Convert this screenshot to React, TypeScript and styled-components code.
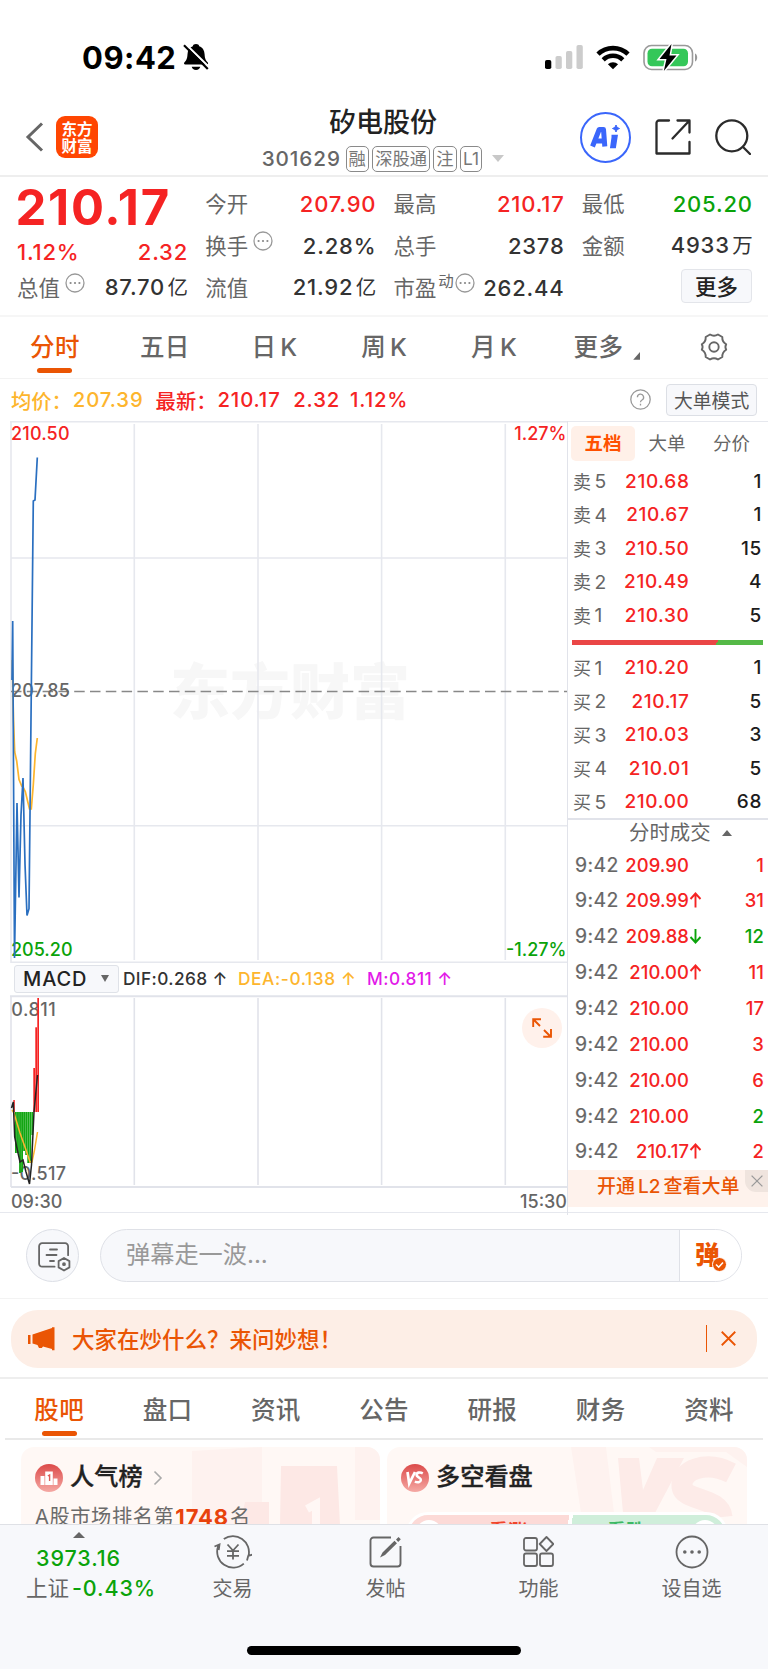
import React from 'react';
import styled, { createGlobalStyle, css } from 'styled-components';

const RED = '#f52323';
const GREEN = '#0aa30a';
const ORANGE = '#ea5504';
const GRAY = '#666666';
const INK = '#333333';
const LINE = '#e6e8ee';

const GlobalStyle = createGlobalStyle`
  * { box-sizing: border-box; }
  html, body { margin: 0; padding: 0; background: #fff; }
  body { font-family: Inter, "Noto Sans CJK SC", sans-serif; color: ${INK}; }
  svg { display: block; flex: none; }
`;

const Screen = styled.div`
  width: 768px;
  height: 1669px;
  overflow: hidden;
  display: flex;
  flex-direction: column;
  background: #fff;
  white-space: nowrap;
`;

/* ---------- status bar ---------- */
const StatusBar = styled.div`
  height: 100px;
  padding: 15px 69px 0 82px;
  display: flex;
  align-items: center;
`;
const Clock = styled.span`
  width: 101px;
  font-size: 31px;
  font-weight: 700;
  letter-spacing: 0.5px;
  color: #000;
`;
const StatusIcons = styled.div`
  margin-left: auto;
  display: flex;
  align-items: center;
  gap: 13px;
`;

/* ---------- header ---------- */
const Header = styled.header`
  height: 77px;
  border-bottom: 2px solid #eeeeee;
  padding: 0 17px 0 25px;
  display: grid;
  grid-template-columns: 200px 1fr 200px;
  align-items: center;
`;
const HeaderLeft = styled.div`
  display: flex;
  align-items: center;
  gap: 12px;
`;
const AppLogo = styled.div`
  width: 42px;
  height: 42px;
  border-radius: 9px;
  background: #ff4602;
  color: #fff;
  font: 700 15.5px/17px "Noto Sans CJK SC", sans-serif;
  text-align: center;
  padding-top: 4px;
`;
const TitleBlock = styled.div`
  display: flex;
  flex-direction: column;
  align-items: center;
  padding: 3px 10px 0 0;
`;
const Title = styled.h1`
  margin: 0;
  font-size: 27px;
  line-height: 34px;
  font-weight: 500;
  color: #222;
  height: 40px;
`;
const CodeRow = styled.div`
  display: flex;
  align-items: center;
  height: 26px;
  gap: 3.5px;
  font-size: 20.7px;
  font-weight: 500;
  color: ${GRAY};
`;
const Code = styled.span`
  width: 80.5px;
  letter-spacing: 0.9px;
`;
const Tag = styled.span`
  height: 26px;
  border: 1.4px solid #8a8a8a;
  border-radius: 5px;
  padding: 0 1.9px;
  font-size: 17.3px;
  line-height: 23px;
  font-weight: 400;
  color: #777;
`;
const Caret = styled.i<{ $w: number; $h: number; $c: string; $up?: boolean; $ml?: number }>`
  width: 0;
  height: 0;
  margin-left: ${p => p.$ml ?? 0}px;
  border-left: ${p => p.$w / 2}px solid transparent;
  border-right: ${p => p.$w / 2}px solid transparent;
  ${p => (p.$up ? 'border-bottom' : 'border-top')}: ${p => p.$h}px solid ${p => p.$c};
`;
const HeaderRight = styled.div`
  display: flex;
  align-items: center;
  justify-content: flex-end;
  gap: 24px;
`;
const AiBadge = styled.div`
  width: 51px;
  height: 51px;
  border: 2.5px solid #3a66fb;
  border-radius: 50%;
  display: grid;
  place-items: center;
`;

/* ---------- quote ---------- */
const Quote = styled.section`
  height: 140px;
  border-bottom: 2px solid #f6f6f6;
  padding: 6px 16px 0 17px;
  display: grid;
  grid-template-columns: repeat(4, 1fr);
  column-gap: 18px;
`;
const QuoteCol = styled.div`
  display: grid;
  grid-template-rows: repeat(3, 42px);
  align-items: center;
`;
const MainCol = styled.div`
  display: grid;
  grid-template-rows: 50px 34px 42px;
  align-items: center;
`;
const BigPrice = styled.div`
  margin-left: -1.5px;
  font-size: 49px;
  line-height: 48px;
  font-weight: 700;
  color: ${RED};
  letter-spacing: 1.7px;
`;
const Pair = styled.div<{ $drop?: number }>`
  display: flex;
  align-items: center;
  justify-content: space-between;
  padding-top: ${p => p.$drop ?? 0}px;
  font-size: 21.5px;
  line-height: 30px;
`;
const Label = styled.span`
  display: flex;
  align-items: flex-start;
  gap: 5px;
  font-size: 21.4px;
  color: ${GRAY};
  sup { font-size: 15.5px; line-height: 18px; margin: 0 -4px 0 -3px; }
`;
const Value = styled.span<{ $c?: string }>`
  font-weight: 500;
  font-size: 22px;
  letter-spacing: 0.8px;
  margin-right: -0.8px;
  color: ${p => p.$c || INK};
  small { font-size: 20.5px; font-weight: 400; margin-left: 2.5px; letter-spacing: 0; }
`;
const MoreButton = styled.button`
  justify-self: end;
  width: 71px;
  height: 34px;
  margin-top: -4px;
  padding: 0;
  border: 1.5px solid #e3e5ea;
  border-radius: 4px;
  background: #f7f8fb;
  font: 500 21.5px/30px "Noto Sans CJK SC", sans-serif;
  color: #222;
`;

/* ---------- tabs ---------- */
const PeriodTabs = styled.nav`
  height: 62px;
  border-bottom: 1.5px solid #f3f3f3;
  display: grid;
  grid-template-columns: repeat(7, 109.8px);
`;
const DetailTabs = styled.nav`
  height: 61px;
  margin: 0 5px;
  border-bottom: 2px solid #e9e9e9;
  display: grid;
  grid-template-columns: repeat(7, 108.3px);
`;
const Tab = styled.div<{ $active?: boolean; $top?: number }>`
  display: flex;
  flex-direction: column;
  align-items: center;
  padding-top: ${p => p.$top ?? 12}px;
  font-size: 24.5px;
  line-height: 36px;
  font-weight: 500;
  color: ${p => (p.$active ? ORANGE : GRAY)};
  &::after {
    content: '';
    width: 35px;
    height: 5px;
    margin-top: 3px;
    border-radius: 3px;
    background: ${p => (p.$active ? ORANGE : 'transparent')};
  }
`;
const TabText = styled.span`
  display: flex;
  align-items: flex-end;
  gap: 4px;
  letter-spacing: 0.3px;
`;
const Corner = styled.i`
  width: 7px;
  height: 8px;
  margin: 0 -6px 5px 6px;
  background: ${GRAY};
  clip-path: polygon(100% 0, 100% 100%, 0 100%);
`;

/* ---------- chart ---------- */
const AverageRow = styled.div`
  height: 42px;
  padding: 0 11px;
  display: flex;
  align-items: center;
  font-size: 20.3px;
  font-weight: 500;
  color: ${RED};
`;
const Avg = styled.span<{ $w: number; $c?: string; $s?: number }>`
  width: ${p => p.$w}px;
  letter-spacing: ${p => p.$s ?? 0.9}px;
  color: ${p => p.$c || RED};
`;
const ModeButton = styled.button`
  width: 91px;
  height: 32px;
  margin-left: 15px;
  padding: 0;
  border: 1.5px solid #dcdfe5;
  border-radius: 4px;
  background: #f7f8fb;
  font: 400 18.8px/28px "Noto Sans CJK SC", sans-serif;
  color: #555;
`;
const Trading = styled.section`
  height: 792px;
  border-bottom: 1.5px solid #e6e8ee;
  display: grid;
  grid-template-columns: 568px 200px;
`;
const ChartSide = styled.div`
  border-right: 1.5px solid #e1e3ea;
  padding-left: 10px;
  display: flex;
  flex-direction: column;
`;
const MacdBar = styled.div`
  height: 32px;
  padding-left: 4px;
  display: flex;
  align-items: center;
  font-size: 17.3px;
  font-weight: 500;
`;
const MacdSelect = styled.div`
  width: 105px;
  height: 28px;
  margin-right: 4px;
  padding: 0 9px 0 8px;
  border: 1.5px solid #dfe2e8;
  border-radius: 3px;
  background: #f7f8fb;
  display: flex;
  align-items: center;
  justify-content: space-between;
  font-size: 20px;
  letter-spacing: 0.9px;
  color: #222;
`;
const MacdValue = styled.span<{ $c: string; $w: number; $s?: number }>`
  width: ${p => p.$w}px;
  letter-spacing: ${p => p.$s ?? 0.4}px;
  color: ${p => p.$c};
`;
const MacdPane = styled.div`
  position: relative;
`;
const ExpandButton = styled.div`
  position: absolute;
  right: 5px;
  top: 13px;
  width: 40px;
  height: 40px;
  border-radius: 50%;
  background: #fff1eb;
  display: grid;
  place-items: center;
`;
const TimeAxis = styled.div`
  display: flex;
  justify-content: space-between;
  padding: 0 0 0 1px;
  font-size: 18px;
  line-height: 27px;
  font-weight: 500;
  color: ${GRAY};
`;

/* ---------- order book ---------- */
const Book = styled.aside`
  border-top: 1.5px solid #e6e8ee;
  display: flex;
  flex-direction: column;
`;
const BookTabs = styled.div`
  height: 43px;
  padding: 4px 6px 0 3px;
  display: grid;
  grid-template-columns: 64px 64px 65px;
`;
const BookTab = styled.div<{ $active?: boolean }>`
  height: 35px;
  border-radius: 5px;
  text-align: center;
  font-size: 18.5px;
  line-height: 34px;
  color: ${GRAY};
  ${p => p.$active && css`background: #fff0e8; color: #ff5000; font-weight: 700;`}
`;
const Level = styled.div`
  height: 33.5px;
  padding: 0 6px 0 5px;
  display: grid;
  grid-template-columns: 40px 76.5px 1fr;
  align-items: center;
  font-size: 19px;
  font-weight: 500;
  letter-spacing: 0.65px;
  text-align: right;
`;
const LevelName = styled.span`
  display: flex;
  align-items: center;
  gap: 3.5px;
  font-size: 19.3px;
  font-weight: 400;
  letter-spacing: 0;
  color: ${GRAY};
  i { font: 400 18px/26px "Noto Sans CJK SC", sans-serif; margin-top: -1px; }
`;
const Ink = styled.span<{ $c: string }>`
  color: ${p => p.$c};
`;
const Ratio = styled.div`
  height: 5px;
  margin: 8px 5px 6px 4px;
  background: linear-gradient(120deg, #ea4646 0 75.5%, #55b947 75.5%);
`;
const DealHead = styled.div`
  height: 29px;
  margin-top: -0.8px;
  border-top: 2px solid #e1e3ea;
  padding-left: 61px;
  display: flex;
  align-items: center;
  gap: 11px;
  font-size: 20.4px;
  line-height: 26px;
  color: ${GRAY};
`;
const Deal = styled.div`
  height: 35.85px;
  padding: 0 4px 0 7px;
  display: grid;
  grid-template-columns: 44px 70px 14px 1fr;
  align-items: center;
  font-size: 18.4px;
  font-weight: 500;
  letter-spacing: 0.1px;
  text-align: right;
  time { font-size: 19.5px; text-align: left; font-weight: 400; letter-spacing: 0.4px; color: ${GRAY}; -webkit-text-stroke: 0.2px ${GRAY}; }
`;
const L2Banner = styled.div`
  height: 37px;
  margin-top: 1px;
  padding-left: 29px;
  display: flex;
  background: #fef2ec;
  font-size: 19px;
  line-height: 34px;
  font-weight: 500;
  color: ${ORANGE};
  word-spacing: -2px;
`;
const L2Close = styled.div`
  width: 23px;
  height: 22px;
  margin-left: auto;
  border-bottom-left-radius: 11px;
  background: #efe4de;
  display: grid;
  place-items: center;
`;

/* ---------- comment input ---------- */
const CommentRow = styled.section`
  height: 87px;
  border-bottom: 1.5px solid #f3f3f3;
  padding: 1px 26px 0;
  display: flex;
  align-items: center;
  gap: 21px;
`;
const RoundButton = styled.div`
  width: 53px;
  height: 53px;
  border: 1.2px solid #dcdfe6;
  border-radius: 50%;
  background: #f7f8fb;
  padding: 12px 0 0 11px;
`;
const InputPill = styled.div`
  width: 642px;
  height: 53px;
  border: 1.5px solid #dfe1e7;
  border-radius: 27px;
  overflow: hidden;
  background: #f7f8fb;
  display: flex;
`;
const Placeholder = styled.span`
  flex: 1;
  padding-left: 25px;
  font-size: 24.2px;
  line-height: 49px;
  color: #999;
`;
const SendBox = styled.div`
  width: 62px;
  border-left: 1.5px solid #dfe1e7;
  background: #fff;
  position: relative;
  padding-left: 15px;
  font: 900 24.5px/48px "Noto Sans CJK SC", sans-serif;
  color: ${ORANGE};
`;
const Check = styled.svg`
  position: absolute;
  left: 32px;
  top: 27px;
`;

/* ---------- promo ---------- */
const PromoWrap = styled.section`
  height: 80px;
  border-bottom: 2px solid #eeeeee;
  padding: 10.5px 11px 0;
`;
const Promo = styled.div`
  height: 58px;
  border-radius: 27px;
  background: #fdeee6;
  padding: 0 21px 0 17px;
  display: flex;
  align-items: center;
  font-size: 22.5px;
  font-weight: 500;
  color: ${ORANGE};
`;
const PromoText = styled.span`
  flex: 1;
  padding-left: 17px;
  margin-top: -1px;
`;
const PromoRule = styled.i`
  width: 1.5px;
  height: 27px;
  margin-right: 14px;
  background: ${ORANGE};
`;

/* ---------- cards ---------- */
const Cards = styled.section`
  height: 84px;
  padding: 7px 21px 0;
  display: grid;
  grid-template-columns: 359px 360px;
  gap: 7px;
  overflow: hidden;
`;
const Card = styled.div`
  position: relative;
  height: 120px;
  border-radius: 13px;
  overflow: hidden;
  background: #fff8f5;
  padding: 15px 14px 0;
`;
const CardArt = styled.svg`
  position: absolute;
  right: 0;
  top: 0;
`;
const CardHead = styled.div`
  position: relative;
  height: 32px;
  display: flex;
  align-items: center;
  gap: 8px;
  font-size: 24.2px;
  font-weight: 500;
  color: #222;
  svg:last-child:not(:first-child) { margin-left: 2px; }
`;
const CardTitle = styled.span`
  line-height: 32px;
  margin: -2px 0 0 -1px;
  -webkit-text-stroke: 0.3px #222;
`;
const Rank = styled.div`
  position: relative;
  display: flex;
  align-items: center;
  margin-top: 7px;
  font-size: 20.2px;
  line-height: 32px;
  letter-spacing: 0.6px;
  color: #6b6b6b;
  b { font-size: 22px; color: #e8420c; letter-spacing: 0.9px; margin: 0 1px 0 1px; }
`;
const Vote = styled.div`
  position: relative;
  margin: 18px 0 0 5px;
  width: 322px;
  height: 44px;
  border-radius: 24px;
  border: 3px solid #fff;
  overflow: hidden;
  background: linear-gradient(96deg, #fcdad7 0 50%, #fff 50% 51.2%, #cfeeda 51.2%);
  display: flex;
  align-items: flex-start;
  font-size: 19px;
  line-height: 26px;
  font-weight: 700;
`;
const VoteDot = styled.i`
  width: 26px;
  height: 26px;
  border-radius: 50%;
  margin: 5px 7px;
  background: #fff;
`;
const VoteSide = styled.span<{ $c: string }>`
  flex: 1;
  padding-top: 4px;
  text-align: center;
  color: ${p => p.$c};
`;

/* ---------- bottom bar ---------- */
const BottomBar = styled.footer`
  height: 145px;
  border-top: 1.5px solid #dfe1e6;
  background: #f7f8fb;
  display: flex;
  flex-direction: column;
`;
const BottomItems = styled.div`
  height: 82px;
  padding-left: 2px;
  display: grid;
  grid-template-columns: 154px repeat(4, 153px);
`;
const IndexCell = styled.div`
  display: flex;
  flex-direction: column;
  align-items: flex-start;
  padding: 7px 0 0 24px;
  font-size: 21.5px;
  line-height: 30px;
  font-weight: 500;
  letter-spacing: 0.9px;
  color: ${GREEN};
`;
const IndexValue = styled.span`
  margin: 5px 0 0 10px;
`;
const IndexChange = styled.span`
  em { font-style: normal; font-weight: 400; letter-spacing: 0; color: ${GRAY}; margin-right: 3px; }
`;
const NavItem = styled.div`
  display: flex;
  flex-direction: column;
  align-items: center;
  padding-top: 10px;
  gap: 5px;
  font-size: 20px;
  line-height: 30px;
  color: ${GRAY};
`;
const HomeIndicator = styled.div`
  width: 274px;
  height: 9px;
  margin: 39px auto 0;
  border-radius: 5px;
  background: #000;
`;

/* ---------- icons ---------- */
const Dots = () => (
  <svg width="20" height="20" viewBox="0 0 20 20">
    <circle cx="10" cy="10" r="9" fill="none" stroke="#999" strokeWidth="1.3" />
    <g fill="#888"><circle cx="5.6" cy="10" r="1.1" /><circle cx="10" cy="10" r="1.1" /><circle cx="14.4" cy="10" r="1.1" /></g>
  </svg>
);
const Cross = ({ s, c, w }: { s: number; c: string; w: number }) => (
  <svg width={s} height={s} viewBox="0 0 14 14"><path d="M.7.7 13.3 13.3M13.3.7.7 13.3" stroke={c} strokeWidth={w} fill="none" /></svg>
);
const BellOff = () => (
  <svg width="26" height="28" viewBox="0 0 26 28">
    <path d="M13 1c1.8 0 3 .9 3.2 2.2 3.6 1.2 5.200 4.300 5.400 8 .2 4.600 1.200 6 3.200 8.300.6.8.3 2-.9 2H2.200c-1.200 0-1.500-1.200-.9-2 2-2.300 3-3.700 3.200-8.300.2-3.700 1.800-6.800 5.300-8C10 1.900 11.200 1 13 1Z" fill="#000" />
    <path d="M8.700 23.700h8.600c-.4 1.900-2 3.300-4.300 3.300s-3.900-1.400-4.300-3.300Z" fill="#000" />
    <path d="M2.500 1 26 24" stroke="#fff" strokeWidth="2.200" />
    <path d="M1 2.300 24.800 26" stroke="#000" strokeWidth="2.200" />
  </svg>
);
const Signal = () => (
  <svg width="38" height="25" viewBox="0 0 38 25">
    <rect x="0" y="15" width="6.300" height="9" rx="1.800" fill="#000" />
    <g fill="#ccc"><rect x="10.500" y="11" width="6.300" height="13" rx="1.800" /><rect x="21" y="6" width="6.300" height="18" rx="1.800" /><rect x="31.500" y="0" width="6.300" height="24" rx="1.800" /></g>
  </svg>
);
const Wifi = () => (
  <svg width="34" height="25" viewBox="0 0 34 25" fill="none" stroke="#000">
    <path d="M2 9.200a21.500 21.500 0 0 1 30 0" strokeWidth="4.600" />
    <path d="M7.200 14.800a14 14 0 0 1 19.600 0" strokeWidth="4.500" />
    <path d="M17 24.300 11.900 19.200a7.400 7.400 0 0 1 10.200 0Z" fill="#000" stroke="none" />
  </svg>
);
const Battery = () => (
  <svg width="56" height="27" viewBox="0 0 56 27">
    <rect x="1" y="1.500" width="48.500" height="24" rx="7.500" fill="none" stroke="#999" strokeWidth="1.600" />
    <path d="M52 9.500c2.900.8 2.900 7.200 0 8Z" fill="#999" />
    <rect x="4.500" y="4.800" width="40.500" height="17.500" rx="4.500" fill="#34c759" />
    <path d="M28.500 0 16.500 15h7l-2.700 12L33.500 11.500h-7Z" fill="#000" stroke="#fff" strokeWidth="3" paintOrder="stroke" />
  </svg>
);
const AiMark = () => (
  <svg width="33" height="26" viewBox="0 0 33 26" fill="none" stroke="#3a66fb">
    <path d="M3.500 22.500 10.200 5.500h4.300l1.300 17M7 17h8" strokeWidth="5" strokeLinejoin="round" />
    <path d="M22.500 12.500h4.500l-1.600 10h-2.500l1.300-9" strokeWidth="3.400" />
    <path d="m27 1 1.100 2.400L30.500 4.500l-2.400 1.100L27 8l-1.100-2.400L23.500 4.500l2.400-1.100Z" fill="#3a66fb" strokeWidth="1" />
  </svg>
);
const ShareIcon = () => (
  <svg width="36" height="36" viewBox="0 0 36 36" fill="none" stroke="#2b2b2b" strokeWidth="2.300" strokeLinecap="round" strokeLinejoin="round">
    <path d="M14 1.500H4A2.500 2.500 0 0 0 1.500 4v30.500h33V23M22.500 1.500h12v12M34 2 17.500 19.500" />
  </svg>
);
const SearchIcon = () => (
  <svg width="36" height="36" viewBox="0 0 36 36" fill="none" stroke="#2b2b2b" strokeWidth="2.300" strokeLinecap="round">
    <circle cx="16.800" cy="16.800" r="15.500" /><path d="m28 28 7 7" />
  </svg>
);
const Gear = () => (
  <svg width="30" height="30" viewBox="0 0 30 30" fill="none" stroke={GRAY} strokeWidth="1.900" strokeLinejoin="round">
    <path d="M11 2.500Q15 5 19 2.500L23.300 5Q23 9.800 27.200 12.300Q25.600 15 27.200 17.700Q23 20.200 23.300 25L19 27.500Q15 25 11 27.500L6.700 25Q7 20.200 2.800 17.700Q4.400 15 2.800 12.300Q7 9.800 6.700 5Z" />
    <circle cx="15" cy="15" r="4.700" />
  </svg>
);
const Help = () => (
  <svg width="21" height="21" viewBox="0 0 21 21" fill="none" stroke="#999" strokeWidth="1.300">
    <circle cx="10.500" cy="10.500" r="9.700" /><path d="M7.400 8.300a3.100 3.100 0 1 1 4.600 2.700c-1 .6-1.500 1-1.500 2.200M10.500 14.800v1.600" />
  </svg>
);
const Expand = () => (
  <svg width="20" height="20" viewBox="0 0 20 20" fill="none" stroke={ORANGE} strokeWidth="1.900">
    <path d="M1.200 9V1.200H9M1.500 1.500 8 8M19 11v7.800h-7.800M18.500 18.500 12 12" />
  </svg>
);
const UpArrow = ({ c, down }: { c: string; down?: boolean }) => (
  <svg width="13" height="16" viewBox="0 0 13 16" fill="none" stroke={c} strokeWidth="1.900">
    <path d={down ? 'M6.500 1v13.500M1.500 9l5 5.500 5-5.500' : 'M6.500 15.500V2M1.500 7l5-5.500 5 5.500'} />
  </svg>
);
const DanmuSettings = () => (
  <svg width="33" height="31" viewBox="0 0 33 31" fill="none" stroke={GRAY} strokeWidth="1.800" strokeLinecap="round" strokeLinejoin="round">
    <path d="M29.500 13V4a3 3 0 0 0-3-3h-23a3 3 0 0 0-3 3v17.500a3 3 0 0 0 3 3H16" transform="translate(.6 .2)" />
    <path d="M12 7.500h7M8.500 13h10M12 19h4" />
    <path d="m26 16 5.400 3.100v6.300L26 28.500l-5.400-3.100v-6.300Z" /><circle cx="26" cy="22.200" r="1" fill={GRAY} />
  </svg>
);
const Megaphone = () => (
  <svg width="27" height="24" viewBox="0 0 27 24" fill={ORANGE}>
    <path d="M0 8h2.500v9H0ZM4.500 7.500 24 1V.300h2.500v23H24V22l-9-2.500-1.200 1.500H11l-1.500-3-5-1.500Z" />
  </svg>
);
const RankIcon = () => (
  <svg width="28" height="28" viewBox="0 0 28 28">
    <defs><linearGradient id="rg" x1="0" y1="0" x2="0" y2="1"><stop offset="0" stopColor="#dc4a49" /><stop offset="1" stopColor="#f5a9a4" /></linearGradient></defs>
    <circle cx="14" cy="14" r="14" fill="url(#rg)" />
    <path d="M5.500 12H9.500V21H5.500ZM10.200 7.500h7.600V21h-7.600ZM18.500 14.500h4V21h-4Z" fill="#fff" />
    <path d="m12.800 12 1.800-1v6" fill="none" stroke="#df5c58" strokeWidth="1.400" />
  </svg>
);
const VsIcon = () => (
  <svg width="28" height="28" viewBox="0 0 28 28">
    <circle cx="14" cy="14" r="14" fill="url(#rg)" />
    <path d="M6.500 8 8.200 19.500 14 8" fill="none" stroke="#fff" strokeWidth="2.700" />
    <path d="M21.800 9.300c-3-1.600-6.200-.7-6.300 1.500-.1 2.500 4.700 2.500 4.400 5.200-.2 2.300-3.600 3-6 1.500" fill="none" stroke="#fff" strokeWidth="2.600" />
  </svg>
);
const TradeIcon = () => (
  <svg width="38" height="34" viewBox="0 0 38 34" fill="none" stroke={GRAY} strokeWidth="1.800">
    <path d="M9.800 4A16 16 0 0 1 34.500 21M29.800 28.600A16 16 0 0 1 4.200 11M.5 11.500l5-2-.8 5.500M33 25.500l1.200-4.500 4-1.300" />
    <path d="m13.500 9.500 5.500 6 5.500-6M19 15v9.500M13 16.200h12M13 20.800h12" />
  </svg>
);
const PostIcon = () => (
  <svg width="33" height="34" viewBox="0 0 33 34" fill="none" stroke={GRAY}>
    <path d="M22 2.500H4.500a3 3 0 0 0-3 3v23a3 3 0 0 0 3 3h24a3 3 0 0 0 3-3V11" strokeWidth="1.900" />
    <path d="m11 22.500 2.500-5L25.500 5.700l2.500 2.500L16 20ZM27 4.500 29.500 2l2.300 2.300L29.200 7Z" fill={GRAY} stroke="none" />
  </svg>
);
const GridIcon = () => (
  <svg width="31" height="34" viewBox="0 0 31 34" fill="none" stroke={GRAY} strokeWidth="1.800" strokeLinejoin="round">
    <rect x="1" y="3" width="13" height="12.500" rx="2" /><rect x="1" y="18.500" width="13" height="12.500" rx="2" /><rect x="17" y="18.500" width="13" height="12.500" rx="2" />
    <path d="m23.500 2 6.800 7-6.800 7-6.800-7Z" />
  </svg>
);
const MoreIcon = () => (
  <svg width="34" height="34" viewBox="0 0 34 34">
    <circle cx="17" cy="17" r="15.500" fill="none" stroke={GRAY} strokeWidth="1.800" />
    <g fill={GRAY}><circle cx="9.800" cy="17" r="1.800" /><circle cx="17" cy="17" r="1.800" /><circle cx="24.200" cy="17" r="1.800" /></g>
  </svg>
);

/* ---------- charts: coordinates are offset by the pane origin ---------- */
const GRID_X = [134.3, 258, 381.6, 505.3];

const PriceChart = () => (
  <svg width="557" height="542" viewBox="10 421 557 542" fontFamily="Inter" fontWeight="500" fontSize="18">
    <text x="170" y="714" fontFamily="Noto Sans CJK SC" fontWeight="900" fontSize="60" fill="#f7f7f7">东方财富</text>
    <g stroke={LINE} strokeWidth="1.600" fill="none">
      {GRID_X.map(x => <path key={x} d={`M${x} 424V960`} />)}
      <path d="M10 421.800H567M11 421V962.200H567M11 558H567M11 825.700H567" />
    </g>
    <path d="M11 691.500H567" stroke="#888" strokeWidth="1.700" strokeDasharray="10.500 5.300" />
    <g fill={RED}><text x="11" y="439.500" textLength="58.500">210.50</text><text x="566.500" y="439.500" textAnchor="end">1.27%</text></g>
    <text x="11" y="697" fill={GRAY} textLength="59">207.85</text>
    <g fill={GREEN}><text x="11" y="955.500" textLength="61.500">205.20</text><text x="566.500" y="955.500" textAnchor="end">-1.27%</text></g>
    <path d="M12.300 660 13.500 720 14.700 752 16.700 761 19 779.500 21.700 786 23 787 25.300 791.600 29.500 809H31.300L33.300 784.700 35.300 753.700 37.300 738" fill="none" stroke="#fdb52d" strokeWidth="1.700" />
    <path d="M12 680 12.700 621 14.500 958 17 803 19 897.600 21 815 23 778 25 864 27 915.500 29 908.700 33.300 501 35 500 37.300 457.500" fill="none" stroke="#2a6fc0" strokeWidth="1.700" />
  </svg>
);

const DOWN_BARS = [1153, 1153, 1173, 1172, 1151, 1155, 1163, 1163, 1135];
const UP_BARS = [1068, 1027.300, 998];

const MacdChart = () => (
  <svg width="557" height="193" viewBox="10 995 557 193" fontFamily="Inter" fontWeight="500" fontSize="18">
    <g stroke="#e1e3ea" strokeWidth="1.600">
      {GRID_X.map(x => <path key={x} d={`M${x} 998V1185`} />)}
      <path d="M11 996V1187" />
      <path d="M10 996.200H567M11 1187H567" strokeWidth="2" />
    </g>
    <g fill={GRAY}><text x="11.300" y="1015.500" textLength="44.500">0.811</text><text x="11" y="1179.500" textLength="55">-0.517</text></g>
    <rect x="13.300" y="1100" width="1.500" height="12" fill={RED} />
    {DOWN_BARS.map((y, i) => <rect key={i} x={15 + i * 2.050} y="1112" width="1.850" height={y - 1112} fill="#12a512" />)}
    {UP_BARS.map((y, i) => <rect key={i} x={33.300 + i * 2} y={y} width="1.700" height={1112 - y} fill={RED} />)}
    <path d="M12 1110 14 1113 20 1133 26 1150 30 1162H32L34.500 1150 37.500 1132" fill="none" stroke="#fdb52d" strokeWidth="1.500" />
    <path d="M11.500 1108 13.300 1102 14.700 1137 16.700 1147 20 1162 23 1160 26 1172 29.500 1184 31.500 1165 34 1112 37.500 1075" fill="none" stroke="#222" strokeWidth="1.500" />
  </svg>
);

const SELLS: [string, string, string][] = [['5', '210.68', '1'], ['4', '210.67', '1'], ['3', '210.50', '15'], ['2', '210.49', '4'], ['1', '210.30', '5']];
const BUYS: [string, string, string][] = [['1', '210.20', '1'], ['2', '210.17', '5'], ['3', '210.03', '3'], ['4', '210.01', '5'], ['5', '210.00', '68']];
const DEALS: { p: string; q: string; c: string; a?: 'up' | 'down' }[] = [
  { p: '209.90', q: '1', c: RED },
  { p: '209.99', q: '31', c: RED, a: 'up' },
  { p: '209.88', q: '12', c: GREEN, a: 'down' },
  { p: '210.00', q: '11', c: RED, a: 'up' },
  { p: '210.00', q: '17', c: RED },
  { p: '210.00', q: '3', c: RED },
  { p: '210.00', q: '6', c: RED },
  { p: '210.00', q: '2', c: GREEN },
  { p: '210.17', q: '2', c: RED, a: 'up' },
];

const Levels = ({ side, rows }: { side: string; rows: [string, string, string][] }) => (
  <>
    {rows.map(([n, p, q]) => (
      <Level key={n}>
        <LevelName><i>{side}</i>{n}</LevelName>
        <Ink $c={RED}>{p}</Ink>
        <Ink $c="#1c1c1c">{q}</Ink>
      </Level>
    ))}
  </>
);

export default function App() {
  return (
    <Screen>
      <GlobalStyle />
      <StatusBar>
        <Clock>09:42</Clock>
        <BellOff />
        <StatusIcons><Signal /><Wifi /><Battery /></StatusIcons>
      </StatusBar>

      <Header>
        <HeaderLeft>
          <svg width="19" height="30" viewBox="0 0 19 30"><path d="M17 1.500 3 15 17 28.500" fill="none" stroke={GRAY} strokeWidth="3" /></svg>
          <AppLogo>东方<br />财富</AppLogo>
        </HeaderLeft>
        <TitleBlock>
          <Title>矽电股份</Title>
          <CodeRow>
            <Code>301629</Code><Tag>融</Tag><Tag>深股通</Tag><Tag>注</Tag><Tag>L1</Tag>
            <Caret $w={12} $h={7} $c="#c8c8c8" $ml={7} />
          </CodeRow>
        </TitleBlock>
        <HeaderRight>
          <AiBadge><AiMark /></AiBadge><ShareIcon /><SearchIcon />
        </HeaderRight>
      </Header>

      <Quote>
        <MainCol>
          <BigPrice>210.17</BigPrice>
          <Pair $drop={4}><Value $c={RED}>1.12%</Value><Value $c={RED}>2.32</Value></Pair>
          <Pair><Label>总值<Dots /></Label><Value>87.70<small>亿</small></Value></Pair>
        </MainCol>
        <QuoteCol>
          <Pair><Label>今开</Label><Value $c={RED}>207.90</Value></Pair>
          <Pair><Label>换手<Dots /></Label><Value>2.28%</Value></Pair>
          <Pair><Label>流值</Label><Value>21.92<small>亿</small></Value></Pair>
        </QuoteCol>
        <QuoteCol>
          <Pair><Label>最高</Label><Value $c={RED}>210.17</Value></Pair>
          <Pair><Label>总手</Label><Value>2378</Value></Pair>
          <Pair><Label>市盈<sup>动</sup><Dots /></Label><Value>262.44</Value></Pair>
        </QuoteCol>
        <QuoteCol>
          <Pair><Label>最低</Label><Value $c={GREEN}>205.20</Value></Pair>
          <Pair><Label>金额</Label><Value>4933<small>万</small></Value></Pair>
          <MoreButton>更多</MoreButton>
        </QuoteCol>
      </Quote>

      <PeriodTabs>
        <Tab $active><TabText>分时</TabText></Tab>
        <Tab><TabText>五日</TabText></Tab>
        <Tab><TabText>日<span>K</span></TabText></Tab>
        <Tab><TabText>周<span>K</span></TabText></Tab>
        <Tab><TabText>月<span>K</span></TabText></Tab>
        <Tab><TabText>更多<Corner /></TabText></Tab>
        <Tab $top={15}><Gear /></Tab>
      </PeriodTabs>

      <AverageRow>
        <Avg $w={62} $s={0} $c="#fdb52d">均价：</Avg><Avg $w={83} $c="#fdb52d">207.39</Avg>
        <Avg $w={62} $s={0}>最新：</Avg><Avg $w={76}>210.17</Avg><Avg $w={57}>2.32</Avg><Avg $w={281}>1.12%</Avg>
        <Help /><ModeButton>大单模式</ModeButton>
      </AverageRow>

      <Trading>
        <ChartSide>
          <PriceChart />
          <MacdBar>
            <MacdSelect>MACD<Caret $w={9} $h={7} $c={GRAY} /></MacdSelect>
            <MacdValue $w={115} $c={INK}>DIF:0.268 ↑</MacdValue>
            <MacdValue $w={129} $s={0.6} $c="#fdb52d">DEA:-0.138 ↑</MacdValue>
            <MacdValue $w={90} $s={0.5} $c="#e21ae8">M:0.811 ↑</MacdValue>
          </MacdBar>
          <MacdPane>
            <MacdChart />
            <ExpandButton><Expand /></ExpandButton>
          </MacdPane>
          <TimeAxis><span>09:30</span><span>15:30</span></TimeAxis>
        </ChartSide>

        <Book>
          <BookTabs><BookTab $active>五档</BookTab><BookTab>大单</BookTab><BookTab>分价</BookTab></BookTabs>
          <Levels side="卖" rows={SELLS} />
          <Ratio />
          <Levels side="买" rows={BUYS} />
          <DealHead>分时成交<Caret $up $w={10} $h={6} $c={GRAY} /></DealHead>
          {DEALS.map((d, i) => (
            <Deal key={i}>
              <time>9:42</time>
              <Ink $c={RED}>{d.p}</Ink>
              {d.a ? <UpArrow c={d.a === 'down' ? GREEN : RED} down={d.a === 'down'} /> : <i />}
              <Ink $c={d.c}>{d.q}</Ink>
            </Deal>
          ))}
          <L2Banner>开通 L2 查看大单<L2Close><Cross s={12} c="#999" w={1.5} /></L2Close></L2Banner>
        </Book>
      </Trading>

      <CommentRow>
        <RoundButton><DanmuSettings /></RoundButton>
        <InputPill>
          <Placeholder>弹幕走一波...</Placeholder>
          <SendBox>
            弹
            <Check width="15" height="15" viewBox="0 0 15 15">
              <circle cx="7.500" cy="7.500" r="7" fill={ORANGE} stroke="#fff" strokeWidth="1" />
              <path d="m4 7.500 2.700 2.700L11 5.500" fill="none" stroke="#fff" strokeWidth="1.600" />
            </Check>
          </SendBox>
        </InputPill>
      </CommentRow>

      <PromoWrap>
        <Promo>
          <Megaphone />
          <PromoText>大家在炒什么？来问妙想！</PromoText>
          <PromoRule />
          <Cross s={15} c={ORANGE} w={1.7} />
        </Promo>
      </PromoWrap>

      <DetailTabs>
        {['股吧', '盘口', '资讯', '公告', '研报', '财务', '资料'].map((t, i) => (
          <Tab key={t} $active={i === 0} $top={13}><TabText>{t}</TabText></Tab>
        ))}
      </DetailTabs>

      <Cards>
        <Card>
          <CardArt width="190" height="78" viewBox="0 0 190 78">
            <path d="M2 4 72 0v78H2ZM165 0h25v73h-25Z" fill="#fef2ef" />
            <path d="M91 19h56l3 59H90ZM55 55h24v23H50Z" fill="#fde8e5" />
            <path d="M117 62 126 57V78" stroke="#fff7f5" strokeWidth="8" fill="none" />
          </CardArt>
          <CardHead>
            <RankIcon /><CardTitle>人气榜</CardTitle>
            <svg width="10" height="16" viewBox="0 0 10 16"><path d="m1.500 1.500 6.500 6.500-6.500 6.500" fill="none" stroke="#aaa" strokeWidth="1.600" /></svg>
          </CardHead>
          <Rank>A股市场排名第<b>1748</b>名</Rank>
        </Card>
        <Card>
          <CardArt width="176" height="78" viewBox="0 0 176 78">
            <path d="M0 0h35l8 66H10ZM78 0h98v20L155 5H85Z" fill="#fef2ef" />
            <path d="M47 11h21l4 32L86 11h27L84 66H52Z" fill="#fdebe8" />
            <path d="M160 26c-25-13-51-3-49 14 2 14 38 10 40 30" fill="none" stroke="#fdebe8" strokeWidth="21" />
          </CardArt>
          <CardHead><VsIcon /><CardTitle>多空看盘</CardTitle></CardHead>
          <Vote>
            <VoteDot /><VoteSide $c="#f0452b">看涨</VoteSide><VoteSide $c="#3db864">看跌</VoteSide><VoteDot />
          </Vote>
        </Card>
      </Cards>

      <BottomBar>
        <BottomItems>
          <IndexCell>
            <Caret $up $w={12} $h={6} $c={GRAY} $ml={47} />
            <IndexValue>3973.16</IndexValue>
            <IndexChange><em>上证</em>-0.43%</IndexChange>
          </IndexCell>
          <NavItem><TradeIcon />交易</NavItem>
          <NavItem><PostIcon />发帖</NavItem>
          <NavItem><GridIcon />功能</NavItem>
          <NavItem><MoreIcon />设自选</NavItem>
        </BottomItems>
        <HomeIndicator />
      </BottomBar>
    </Screen>
  );
}
